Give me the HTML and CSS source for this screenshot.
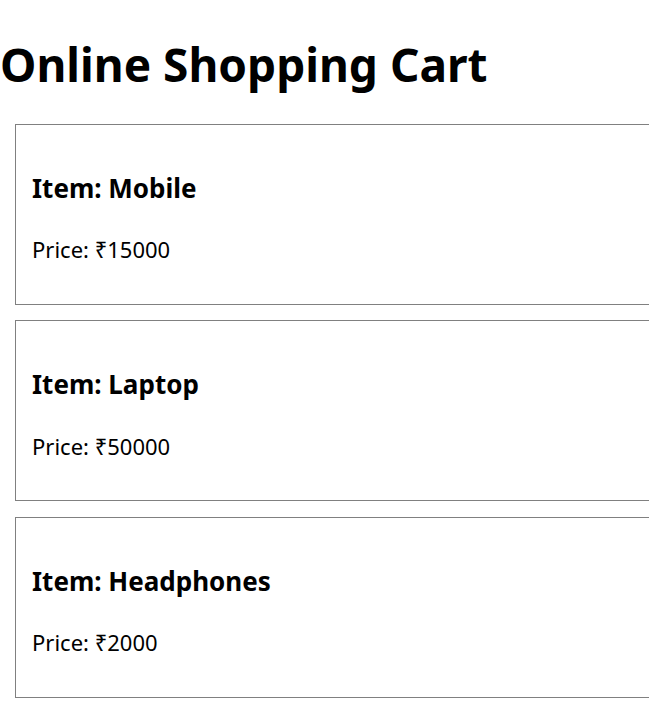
FILE: index.html
```html
<!DOCTYPE html>
<html lang="en">
<head>
<meta charset="utf-8">
<title>Online Shopping Cart</title>
<link rel="stylesheet" href="styles.css">
</head>
<body>
<h1 class="title">Online Shopping Cart</h1>
<div class="cart">
  <div class="item">
    <h3 class="item-name">Item: Mobile</h3>
    <p class="item-price">Price: ₹15000</p>
  </div>
  <div class="item">
    <h3 class="item-name">Item: Laptop</h3>
    <p class="item-price">Price: ₹50000</p>
  </div>
  <div class="item">
    <h3 class="item-name">Item: Headphones</h3>
    <p class="item-price">Price: ₹2000</p>
  </div>
</div>
</body>
</html>
```

FILE: styles.css
```css
body {
  margin: 0;
  font-family: "Noto Sans", "DejaVu Sans", sans-serif;
  color: #000;
  background: #fff;
}
.title {
  font-size: 46px;
  line-height: 54px;
  font-weight: 700;
  margin: 37.2px 0 32.8px 0;
}
.cart {
  display: flex;
  flex-direction: column;
  gap: 15.5px;
  margin: 0 0 0 15px;
}
.item {
  border: 1px solid #808080;
  border-right: 0;
  padding: 46.9px 16px 40.5px 16px;
}
.item-name {
  font-size: 26px;
  line-height: 32px;
  font-weight: 700;
  margin: 0 0 31.6px 0;
}
.item-price {
  font-size: 22px;
  line-height: 28px;
  margin: 0;
}
```
